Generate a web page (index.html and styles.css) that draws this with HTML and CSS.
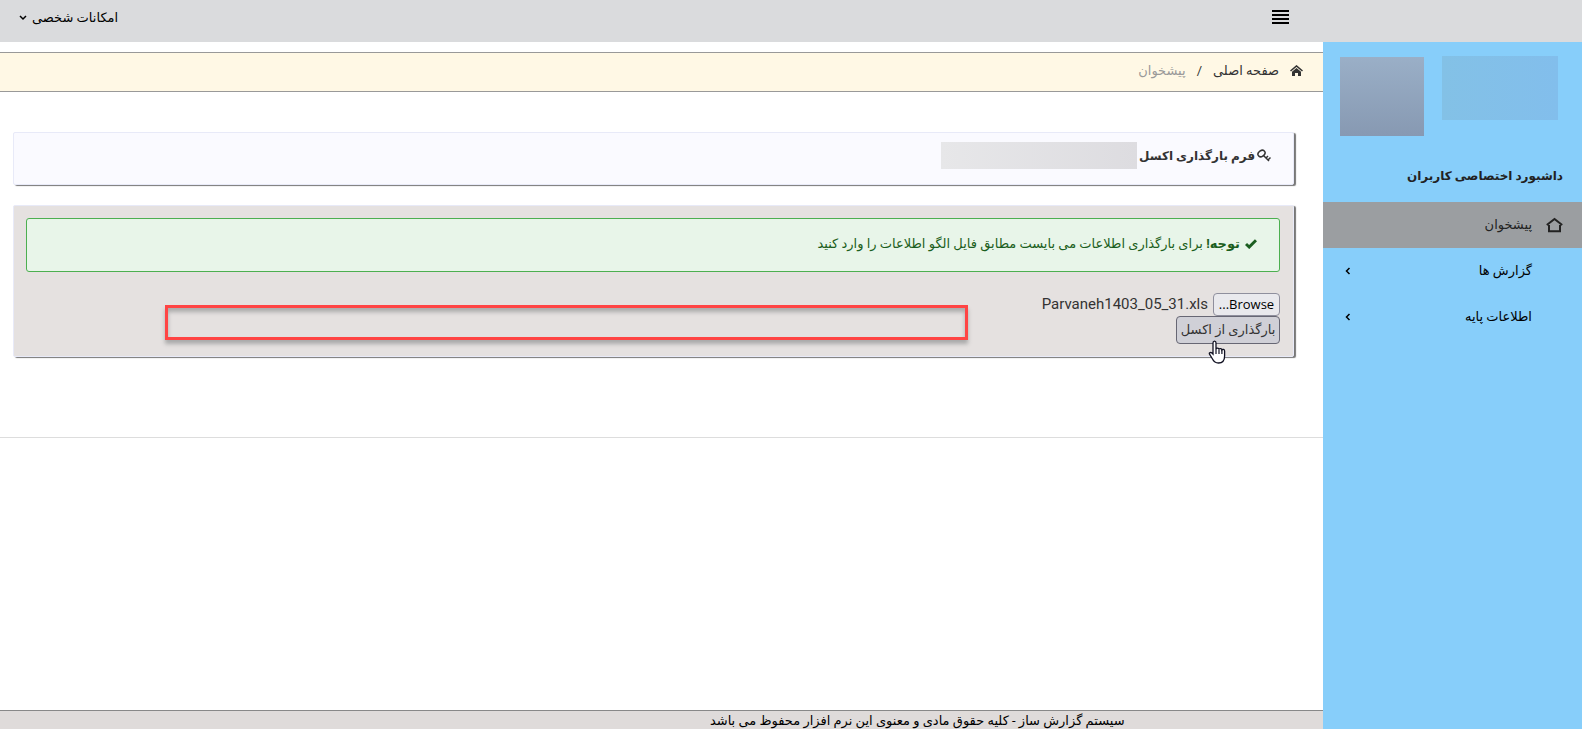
FILE: index.html
```html
<!DOCTYPE html>
<html lang="fa" dir="rtl">
<head>
<meta charset="UTF-8">
<meta name="viewport" content="width=device-width, initial-scale=1.0">
<title>سیستم گزارش ساز</title>
<link rel="stylesheet" href="styles.css">
</head>
<body>
<header class="topbar">
  <button type="button" class="menu-toggle" aria-label="منو">
    <svg width="17" height="14" viewBox="0 0 17 14"><path d="M0 1h17M0 5h17M0 9h17M0 13h17" stroke="#000" stroke-width="2"/></svg>
  </button>
  <a href="#" class="personal">امکانات شخصی
    <svg width="8" height="6" viewBox="0 0 8 6"><path d="M1 1l3 3 3-3" fill="none" stroke="#000" stroke-width="1.5"/></svg>
  </a>
</header>

<div class="wrapper">
  <aside class="sidebar">
    <div class="profile">
      <div class="profile-name"></div>
      <div class="profile-photo"></div>
    </div>
    <h2 class="sidebar-title">داشبورد اختصاصی کاربران</h2>
    <nav>
      <a href="#" class="nav-item active">
        <svg class="nav-icon" width="17" height="16" viewBox="0 0 17 16"><path d="M.8 8L8.500 2l7.700 6M3 8v6.200h3.500M14 8v6.200h-3.500M3 14.200h11" fill="none" stroke="#222" stroke-width="2"/></svg>
        <span>پیشخوان</span>
      </a>
      <a href="#" class="nav-item">
        <span class="nav-icon"></span>
        <span>گزارش ها</span>
        <svg class="arrow" width="6" height="8" viewBox="0 0 6 8"><path d="M4.500 1l-3 3 3 3" fill="none" stroke="#000" stroke-width="1.500"/></svg>
      </a>
      <a href="#" class="nav-item">
        <span class="nav-icon"></span>
        <span>اطلاعات پایه</span>
        <svg class="arrow" width="6" height="8" viewBox="0 0 6 8"><path d="M4.500 1l-3 3 3 3" fill="none" stroke="#000" stroke-width="1.500"/></svg>
      </a>
    </nav>
  </aside>

  <div class="page">
    <nav class="breadcrumb">
      <svg width="13" height="12" viewBox="0 0 13 12"><path d="M0.500 6L6.500 1l6 5" fill="none" stroke="#333" stroke-width="1.600"/><path d="M2 6.800L6.500 3 11 6.800V11H8V8H5v3H2z" fill="#333"/></svg>
      <a href="#">صفحه اصلی</a>
      <span>/</span>
      <span class="current">پیشخوان</span>
    </nav>

    <main class="content">
      <section class="card card-title">
        <svg width="14" height="14" viewBox="0 0 14 14"><ellipse cx="4.500" cy="4.500" rx="3.800" ry="2.800" transform="rotate(-35 4.500 4.500)" fill="none" stroke="#333" stroke-width="1.500"/><path d="M6.500 6.500l5.500 5.500M9 9l2-2M11 11l2.500-2.500" fill="none" stroke="#333" stroke-width="1.500"/></svg>
        <h1>فرم بارگذاری اکسل</h1>
        <span class="masked"></span>
      </section>

      <section class="card card-form">
        <div class="alert">
          <svg width="12" height="10" viewBox="0 0 12 10"><path d="M1 5l3.200 3L11 1.200" fill="none" stroke="#1b5e20" stroke-width="3"/></svg>
          <p><strong>توجه!</strong> برای بارگذاری اطلاعات می بایست مطابق فایل الگو اطلاعات را وارد کنید</p>
        </div>
        <form>
          <div class="file-row">
            <input type="file" id="excelFile" accept=".xls,.xlsx" aria-label="فایل اکسل" hidden>
            <button type="button" class="browse" id="browse">Browse...</button>
            <output id="fileName" for="excelFile">Parvaneh1403_05_31.xls</output>
          </div>
          <div class="upload-row">
            <button type="submit" class="upload">بارگذاری از اکسل</button>
            <svg class="pointer" width="18" height="24" viewBox="0 0 18 24"><path d="M5 14V3c0-2.600 3-2.600 3 0v6c.3-1.200 2.800-1.200 3 .3.400-1.100 2.700-.9 2.900.6.600-1 2.700-.6 2.700 1.100v5c0 4-2 7-6.100 7-3.500 0-4.800-1.500-6-4l-3-4.800C.600 12.500 3 11.500 5 14z" fill="#fff" stroke="#111122" stroke-width="1.300"/><path d="M8 9v5M11 9.500V14M13.900 10v4" stroke="#111122" stroke-width="1.200"/></svg>
          </div>
        </form>
        <div class="highlight"></div>
      </section>
    </main>
    <hr>
    <footer class="footer">سیستم گزارش ساز - کلیه حقوق مادی و معنوی این نرم افزار محفوظ می باشد</footer>
  </div>
</div>

<script>
const fileInput = document.getElementById('excelFile');

document.getElementById('browse').addEventListener('click', () => fileInput.click());

fileInput.addEventListener('change', () => {
  if (fileInput.files.length) {
    document.getElementById('fileName').textContent = fileInput.files[0].name;
  }
});
</script>
</body>
</html>
```
FILE: styles.css
```css
* {
  box-sizing: border-box;
}
body {
  margin: 0;
  height: 100vh;
  display: flex;
  flex-direction: column;
  overflow: hidden;
  font-family: Roboto, "DejaVu Sans", sans-serif;
  font-size: 13px;
  line-height: 20px;
  color: #333;
  background: #fff;
}
a {
  color: inherit;
  text-decoration: none;
}
svg {
  flex: none;
}
h1, h2, p {
  margin: 0;
}
button {
  font-family: inherit;
  cursor: pointer;
}

.topbar {
  flex: none;
  height: 42px;
  display: flex;
  justify-content: space-between;
  padding: 8px 293px 0 19px;
  background: #dadbdd;
  color: #000;
}
.menu-toggle {
  height: 20px;
  padding: 0;
  border: 0;
  background: none;
}
.personal {
  display: flex;
  align-items: center;
  gap: 5px;
  height: 20px;
}

.wrapper {
  flex: 1;
  display: flex;
  min-height: 0;
}
.sidebar {
  flex: none;
  width: 259px;
  background: #87cefa;
  color: #000;
}
.profile {
  display: flex;
  justify-content: space-between;
  height: 112px;
  padding: 14px 24px 0 17px;
}
.profile-name {
  width: 116px;
  height: 64px;
  background: linear-gradient(90deg, #83c1e6, #82beec);
}
.profile-photo {
  width: 84px;
  height: 79px;
  margin-top: 1px;
  background: linear-gradient(#9aafc7, #8799b2);
}
.sidebar-title {
  height: 48px;
  padding: 12px 19px 0;
  font-size: 12px;
  line-height: 20px;
  color: #222;
}
.nav-item {
  display: flex;
  align-items: center;
  height: 46px;
  padding: 0 19px 0 22px;
}
.nav-item.active {
  background: #9b9ea1;
  color: #222;
}
.nav-icon {
  width: 17px;
  margin-left: 14px;
}
.arrow {
  margin-right: auto;
}

.page {
  flex: 1;
  min-width: 0;
  display: flex;
  flex-direction: column;
}
.breadcrumb {
  display: flex;
  align-items: center;
  gap: 11px;
  height: 40px;
  margin-top: 10px;
  padding: 0 20px 2px;
  border: solid #999;
  border-width: 1px 0;
  background: #fff8e5;
}
.breadcrumb .current {
  color: #999;
}
.content {
  padding: 40px 29px 0 13px;
}
.card {
  position: relative;
  margin-bottom: 20px;
  border: 1px solid #e8eaf8;
  border-radius: 2px;
  box-shadow: 2px 1px 1px #777;
}
.card-title {
  display: flex;
  align-items: center;
  gap: 2px;
  height: 53px;
  padding: 0 22px 6px;
  background: #fafaff;
}
.card-title h1 {
  font-size: 12px;
  line-height: 20px;
}
.masked {
  width: 196px;
  height: 27px;
  background: linear-gradient(270deg, #dddce0, #e7e7e9);
}
.card-form {
  height: 152px;
  padding: 12px;
  padding-right: 13px;
  background: #e5e1e0;
}
.alert {
  display: flex;
  align-items: center;
  gap: 5px;
  height: 54px;
  margin-bottom: 20px;
  padding: 0 22px 2px;
  border: 1px solid #4caf50;
  border-radius: 3px;
  background: #e8f5e9;
  color: #1b5e20;
}
.file-row {
  display: flex;
  align-items: center;
  gap: 5px;
  height: 24px;
}
.file-row output {
  font-size: 15px;
  direction: ltr;
}
.browse {
  width: 67px;
  height: 23px;
  padding: 0;
  border: 1px solid #8f8f9d;
  border-radius: 4px;
  background: #e9e9ed;
  color: #000;
  font-family: "Open Sans", sans-serif;
  font-size: 13px;
  line-height: 20px;
}
.upload-row {
  position: relative;
}
.upload {
  display: block;
  width: 104px;
  height: 28px;
  padding: 0 0 2px;
  border: 1px solid #676774;
  border-radius: 4px;
  background: #d0d0d7;
  color: #333;
  font-size: 13px;
}
.pointer {
  position: absolute;
  top: 24px;
  right: 54px;
}
/* marks the empty result area */
.highlight {
  position: absolute;
  left: 151px;
  right: 325px;
  top: 99px;
  height: 35px;
  border: 3px solid #ff4444;
  box-shadow: 0 4px 4px #aaa, inset 0 4px 4px #aaa;
}
hr {
  width: 100%;
  margin: 60px 0 0;
  border: 0;
  border-top: 1px solid #ddd;
}
.footer {
  height: 19px;
  margin-top: auto;
  padding-right: 15%;
  border-top: 1px solid #888;
  background: #dfdbda;
  color: #000;
}
```
